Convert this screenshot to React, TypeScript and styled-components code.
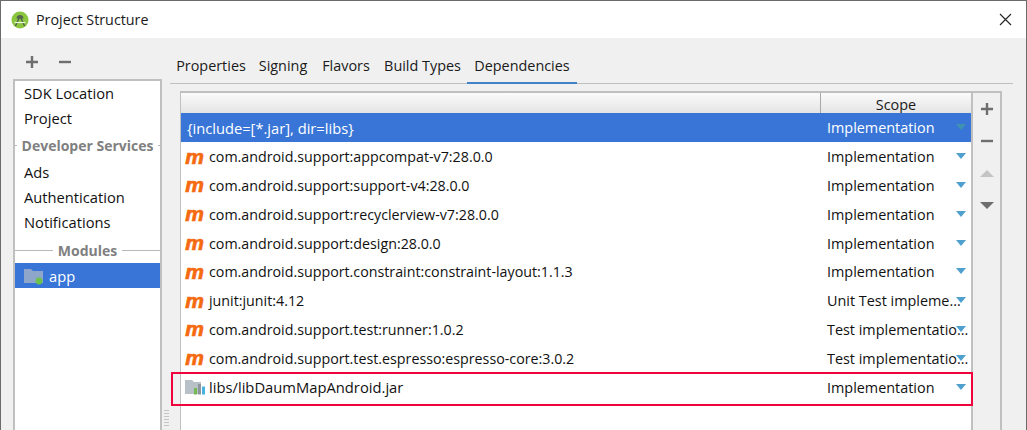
import React from 'react'
import styled, { createGlobalStyle } from 'styled-components'

const GlobalStyle = createGlobalStyle`
  html, body { margin: 0; padding: 0; background: #f0f0f0; }
  * { box-sizing: border-box; }
`

const Window = styled.div`
  position: relative;
  width: 1027px;
  height: 430px;
  overflow: hidden;
  background: #f0f0f0;
  border-top: 1px solid #6b6b6b;
  border-left: 1px solid #6b6b6b;
  border-right: 1px solid #6b6b6b;
  font-family: 'Open Sans', 'Noto Sans', sans-serif;
  font-size: 14.3px;
  color: #111;
`
const TitleBar = styled.div`
  height: 37px;
  background: #fff;
  display: flex;
  align-items: center;
  padding: 0 14px 0 10px;
  gap: 7px;
`
const TitleText = styled.div`
  flex: 1;
  font-size: 14.3px;
  color: #1a1a1a;
`
const Body = styled.div`
  display: flex;
  height: 392px;
  padding-left: 12px;
`
const SideColumn = styled.div`
  width: 149px;
  display: flex;
  flex-direction: column;
`
const SideTools = styled.div`
  height: 41px;
  display: flex;
  align-items: center;
  gap: 17px;
  padding: 6px 0 0 11px;
`
const SideList = styled.div`
  flex: 1;
  background: #fff;
  border: solid #c0c0c0;
  border-width: 2px 2px 0 2px;
  font-size: 14.7px;
`
const SideItem = styled.div<{ $selected?: boolean }>`
  height: 25px;
  line-height: 25px;
  padding: ${p => (p.$selected ? '1px' : '0')} 0 0 9px;
  display: flex;
  align-items: center;
  gap: 3px;
  background: ${p => (p.$selected ? '#3875d7' : 'transparent')};
  color: ${p => (p.$selected ? '#fff' : '#111')};
`
const SideGroup = styled.div<{ $height: number; $drop?: number }>`
  height: ${p => p.$height}px;
  padding-top: ${p => p.$drop ?? 0}px;
  display: flex;
  align-items: center;
  gap: 5px;
  font-size: 14px;
  font-weight: 700;
  color: #808080;
  &::before, &::after {
    content: '';
    flex: 1;
    height: 1px;
    background: #b8b8b8;
  }
`
const Splitter = styled.div`
  width: 8px;
  display: flex;
  align-items: flex-end;
  justify-content: center;
  padding-bottom: 4px;
`
const Grip = styled.div`
  width: 5px;
  height: 16px;
  background: repeating-linear-gradient(#c4c4c4 0 1px, transparent 1px 3px);
`
const MainColumn = styled.div`
  width: 843px;
  display: flex;
  flex-direction: column;
`
const Tabs = styled.div`
  height: 46px;
  display: flex;
  align-items: flex-end;
  font-size: 14.4px;
  border-bottom: 1px solid #c0c0c0;
`
const Tab = styled.div<{ $width: number; $active?: boolean }>`
  width: ${p => p.$width}px;
  height: 32px;
  padding-top: 4px;
  line-height: 20px;
  margin-bottom: -1px;
  text-align: center;
  white-space: nowrap;
  border-bottom: 2px solid ${p => (p.$active ? '#4083c9' : 'transparent')};
  color: #1a1a1a;
`
const Panel = styled.div`
  flex: 1;
  margin: 7px 11px 0 10px;
  display: flex;
  border: solid #c0c0c0;
  border-width: 2px 2px 0 1px;
`
const Table = styled.div`
  width: 792px;
  background: #fff;
  border-right: 2px solid #c0c0c0;
  font-size: 14.4px;
`
const HeaderRow = styled.div`
  height: 20px;
  display: flex;
  background: linear-gradient(#fbfbfb, #e4e4e4);
`
const HeaderBlank = styled.div`
  width: 640px;
  border-right: 1px solid #a8a8a8;
`
const HeaderCell = styled.div`
  flex: 1;
  text-align: center;
  line-height: 23px;
  color: #1a1a1a;
`
const Row = styled.div<{ $selected?: boolean }>`
  height: 28.8px;
  padding-top: 1px;
  display: flex;
  align-items: center;
  position: relative;
  background: ${p => (p.$selected ? '#3875d7' : 'transparent')};
  color: ${p => (p.$selected ? '#fff' : '#111')};
`
const NameCell = styled.div<{ $inset?: number; $gap?: number }>`
  width: 646px;
  padding-left: ${p => p.$inset ?? 4}px;
  display: flex;
  align-items: center;
  gap: ${p => p.$gap ?? 5}px;
`
const NameText = styled.span<{ $size?: number }>`
  font-size: ${p => p.$size ?? 14.25}px;
`
const ScopeCell = styled.div`
  flex: 1;
  white-space: nowrap;
`
const MavenMark = styled.span`
  width: 19px;
  text-align: center;
  font-family: 'Liberation Sans', sans-serif;
  font-style: italic;
  font-weight: 700;
  font-size: 21px;
  line-height: 24px;
  color: #f56a10;
  -webkit-text-stroke: 0.7px #f56a10;
`
const RowArrow = styled.span<{ $dim?: boolean }>`
  position: absolute;
  right: 5px;
  top: 50%;
  margin-top: -3px;
  width: 0;
  height: 0;
  border-left: 5px solid transparent;
  border-right: 5px solid transparent;
  border-top: 6px solid ${p => (p.$dim ? '#3f93b0' : '#4f9fcf')};
`
const SideToolbar = styled.div`
  flex: 1;
  display: flex;
  flex-direction: column;
  align-items: center;
  padding-top: 8px;
  gap: 16px;
`
const ToolButton = styled.svg`
  display: block;
`
const Highlight = styled.div`
  position: absolute;
  left: 170px;
  top: 371px;
  width: 802px;
  height: 34px;
  border: 2px solid #f0033c;
`

const GLYPH = '#6e6e6e'

const PlusIcon = () => (
  <ToolButton width="16" height="16" viewBox="0 0 16 16">
    <path d="M8 2v12M2 8h12" stroke={GLYPH} strokeWidth="2.4" fill="none" />
  </ToolButton>
)
const MinusIcon = () => (
  <ToolButton width="16" height="16" viewBox="0 0 16 16">
    <path d="M2 8h12" stroke={GLYPH} strokeWidth="2.4" fill="none" />
  </ToolButton>
)
const TriangleIcon = ({ up }: { up?: boolean }) => (
  <ToolButton width="16" height="16" viewBox="0 0 16 16">
    <path d={up ? 'M1 12 8 5l7 7z' : 'M1 5h14l-7 7z'} fill={up ? '#c4c4c4' : GLYPH} />
  </ToolButton>
)
const CloseIcon = () => (
  <svg width="13" height="13" viewBox="0 0 13 13">
    <path d="M1 1l11 11M12 1 1 12" stroke="#222" strokeWidth="1.1" fill="none" />
  </svg>
)
const StudioIcon = () => (
  <svg width="18" height="18" viewBox="0 0 18 18">
    <circle cx="9" cy="9" r="8.5" fill="#8cc63f" />
    <path d="M5.5 7.5a3.5 3.5 0 0 1 7 0z" fill="#56654e" />
    <path d="M8.1 7 4.5 15M9.9 7 13.5 15" stroke="#4c5a48" strokeWidth="1.3" fill="none" />
    <path d="M3.5 11.5h11" stroke="#eef5e0" strokeWidth="1.2" />
  </svg>
)
const ModuleFolder = () => (
  <svg width="22" height="17" viewBox="0 0 22 17">
    <path d="M0 1h7l2 2h10v12H0z" fill="#8ea6c9" />
    <circle cx="15" cy="13" r="3.4" fill="#6cc24a" />
  </svg>
)
const JarIcon = () => (
  <svg width="20" height="16" viewBox="0 0 20 16" style={{ display: 'block' }}>
    <path d="M0 1h7l2 2h7v12H0z" fill="#b9c1c8" />
    <rect x="9" y="9" width="3" height="6.5" fill="#74b84f" />
    <rect x="13" y="5" width="3" height="10.5" fill="#8c959c" />
    <rect x="17" y="7.5" width="3" height="8" fill="#45b3e0" />
  </svg>
)

const rows = [
  { name: 'com.android.support:appcompat-v7:28.0.0', scope: 'Implementation' },
  { name: 'com.android.support:support-v4:28.0.0', scope: 'Implementation' },
  { name: 'com.android.support:recyclerview-v7:28.0.0', scope: 'Implementation' },
  { name: 'com.android.support:design:28.0.0', scope: 'Implementation' },
  { name: 'com.android.support.constraint:constraint-layout:1.1.3', scope: 'Implementation' },
  { name: 'junit:junit:4.12', scope: 'Unit Test impleme...' },
  { name: 'com.android.support.test:runner:1.0.2', scope: 'Test implementatio...' },
  { name: 'com.android.support.test.espresso:espresso-core:3.0.2', scope: 'Test implementatio...' },
]

export default function App() {
  return (
    <Window>
      <GlobalStyle />
      <TitleBar>
        <StudioIcon />
        <TitleText>Project Structure</TitleText>
        <CloseIcon />
      </TitleBar>
      <Body>
        <SideColumn>
          <SideTools>
            <PlusIcon />
            <MinusIcon />
          </SideTools>
          <SideList>
            <SideItem>SDK Location</SideItem>
            <SideItem>Project</SideItem>
            <SideGroup $height={29}>Developer Services</SideGroup>
            <SideItem>Ads</SideItem>
            <SideItem>Authentication</SideItem>
            <SideItem>Notifications</SideItem>
            <SideGroup $height={28} $drop={2}>Modules</SideGroup>
            <SideItem $selected>
              <ModuleFolder />
              app
            </SideItem>
          </SideList>
        </SideColumn>
        <Splitter>
          <Grip />
        </Splitter>
        <MainColumn>
          <Tabs>
            <Tab $width={82}>Properties</Tab>
            <Tab $width={62}>Signing</Tab>
            <Tab $width={64}>Flavors</Tab>
            <Tab $width={89}>Build Types</Tab>
            <Tab $width={110} $active>Dependencies</Tab>
          </Tabs>
          <Panel>
            <Table>
              <HeaderRow>
                <HeaderBlank />
                <HeaderCell>Scope</HeaderCell>
              </HeaderRow>
              <Row $selected>
                <NameCell $inset={6}>
                  <NameText $size={14.7}>{'{include=[*.jar], dir=libs}'}</NameText>
                </NameCell>
                <ScopeCell>Implementation</ScopeCell>
                <RowArrow $dim />
              </Row>
              {rows.map(r => (
                <Row key={r.name}>
                  <NameCell>
                    <MavenMark>m</MavenMark>
                    <NameText>{r.name}</NameText>
                  </NameCell>
                  <ScopeCell>{r.scope}</ScopeCell>
                  <RowArrow />
                </Row>
              ))}
              <Row>
                <NameCell $gap={4}>
                  <JarIcon />
                  <NameText $size={14.75}>libs/libDaumMapAndroid.jar</NameText>
                </NameCell>
                <ScopeCell>Implementation</ScopeCell>
                <RowArrow />
              </Row>
            </Table>
            <SideToolbar>
              <PlusIcon />
              <MinusIcon />
              <TriangleIcon up />
              <TriangleIcon />
            </SideToolbar>
          </Panel>
        </MainColumn>
      </Body>
      <Highlight />
    </Window>
  )
}
